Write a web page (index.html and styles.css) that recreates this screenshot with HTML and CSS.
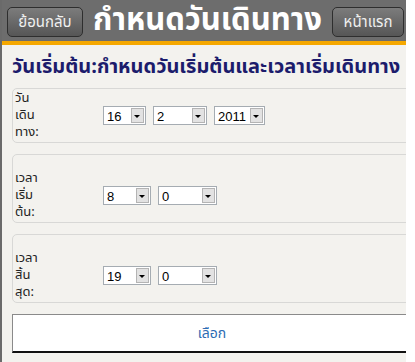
FILE: index.html
```html
<!DOCTYPE html>
<html lang="th">
<head>
<meta charset="utf-8">
<title>กำหนดวันเดินทาง</title>
<link rel="stylesheet" href="styles.css">
</head>
<body>
<div class="page">
  <header class="bar">
    <a class="btn btn-back" href="#">ย้อนกลับ</a>
    <h1 class="title">กำหนดวันเดินทาง</h1>
    <a class="btn btn-home" href="#">หน้าแรก</a>
  </header>
  <main class="content">
    <h2 class="heading">วันเริ่มต้น:กำหนดวันเริ่มต้นและเวลาเริ่มเดินทาง</h2>
    <div class="field">
      <label class="lbl">วัน<br>เดิน<br>ทาง:</label>
      <div class="sels">
        <span class="sel w43"><select><option>16</option></select></span>
        <span class="sel w53"><select><option>2</option></select></span>
        <span class="sel w51"><select><option>2011</option></select></span>
      </div>
    </div>
    <div class="field tall">
      <label class="lbl">เวลา<br>เริ่ม<br>ต้น:</label>
      <div class="sels">
        <span class="sel w48"><select><option>8</option></select></span>
        <span class="sel w59"><select><option>0</option></select></span>
      </div>
    </div>
    <div class="field tall">
      <label class="lbl">เวลา<br>สิ้น<br>สุด:</label>
      <div class="sels">
        <span class="sel w48"><select><option>19</option></select></span>
        <span class="sel w59"><select><option>0</option></select></span>
      </div>
    </div>
    <button class="choose" type="button">เลือก</button>
  </main>
</div>
</body>
</html>
```
FILE: styles.css
```css
html, body {
  margin: 0;
  padding: 0;
  background: #ffffff;
}
body {
  font-family: Tahoma, "Noto Sans Thai", "Noto Sans", "DejaVu Sans", sans-serif;
  font-size: 13px;
  color: #222;
}
.page {
  width: 404px;
  height: 362px;
  border-left: 2px solid #6a6a6a;
  background: #f3f2ee;
  overflow: hidden;
}
.bar {
  height: 41px;
  background: #6d6d6d;
  border-bottom: 4px solid #f5a800;
  display: flex;
  align-items: center;
  padding: 0 2px 0 5px;
}
.btn {
  display: flex;
  align-items: center;
  justify-content: center;
  box-sizing: border-box;
  height: 30px;
  padding: 0;
  border: 1px solid #2e2e2e;
  border-radius: 5px;
  background: linear-gradient(#7c7c7c, #565656);
  color: #f0f0f0;
  font-size: 15px;
  text-decoration: none;
  margin-top: 3px;
  flex: none;
}
.btn-back { width: 76px; }
.btn-home { width: 72px; }
.title {
  flex: 1;
  min-width: 0;
  margin: 0;
  text-align: center;
  color: #ffffff;
  font-size: 31px;
  font-weight: bold;
  line-height: 41px;
  white-space: nowrap;
}
.content {
  padding: 8px 0 0 10px;
}
.heading {
  margin: 0 0 7px 0;
  color: #1c1c6c;
  font-size: 20px;
  font-weight: bold;
  white-space: nowrap;
  line-height: 28px;
}
.field {
  width: 400px;
  box-sizing: border-box;
  border: 1px solid #d8d8d6;
  border-radius: 5px;
  display: flex;
  align-items: center;
  padding: 1px 0 1px 2px;
  margin-bottom: 11px;
}
.field.tall {
  padding-top: 15px;
}
.lbl {
  width: 88px;
  line-height: 17px;
  color: #222;
}
.sels {
  display: flex;
  gap: 7px;
}
.sel {
  position: relative;
  display: inline-block;
  height: 19px;
  box-sizing: border-box;
  border: 1px solid #a5acb2;
  background: #fff;
}
.sel select {
  appearance: none;
  -webkit-appearance: none;
  border: 0;
  background: transparent;
  width: 100%;
  height: 17px;
  padding: 0 0 0 3px;
  margin: 0;
  font-family: "Liberation Sans", Arial, sans-serif;
  font-size: 13px;
  color: #000;
}
.sel::after {
  content: "";
  position: absolute;
  right: 1px;
  top: 1px;
  width: 13px;
  height: 15px;
  box-sizing: border-box;
  border: 1px solid #b4b4b4;
  background: #e2e2e2;
  pointer-events: none;
}
.sel::before {
  content: "";
  position: absolute;
  right: 5px;
  top: 8px;
  border-left: 3px solid transparent;
  border-right: 3px solid transparent;
  border-top: 3px solid #000;
  z-index: 1;
  pointer-events: none;
}
.w43 { width: 43px; }
.w53 { width: 54px; }
.w51 { width: 51px; }
.w48 { width: 48px; }
.w59 { width: 59px; }
.choose {
  display: block;
  width: 400px;
  height: 39px;
  margin-top: 0;
  background: #fff;
  border: 1px solid #8a8a8a;
  border-bottom: 2px solid #111;
  color: #2d6cb3;
  font-family: inherit;
  font-size: 14px;
  text-align: center;
  padding: 0;
}
```
